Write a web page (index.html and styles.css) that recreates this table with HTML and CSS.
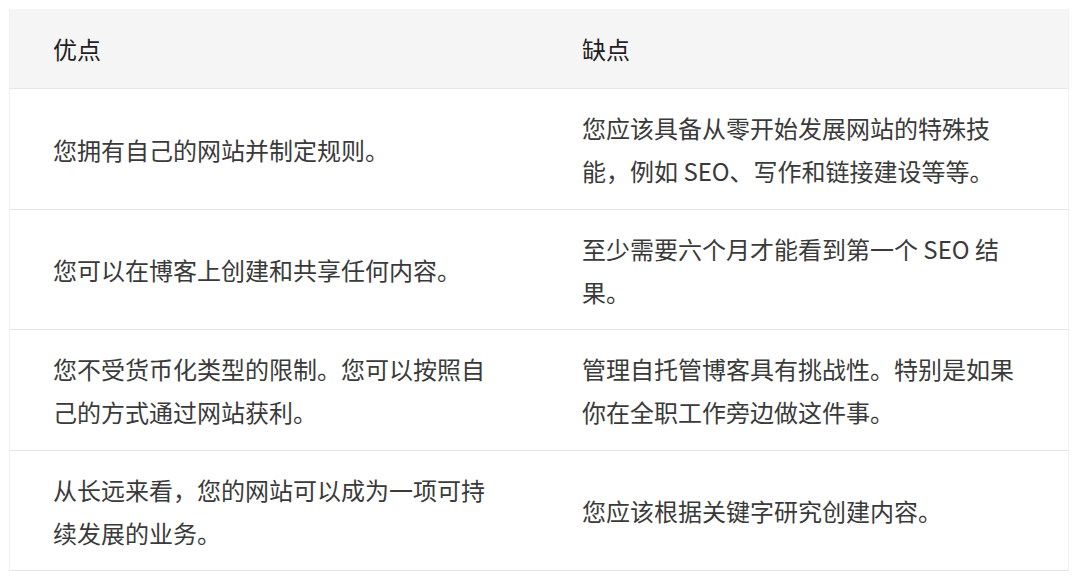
FILE: index.html
```html
<!DOCTYPE html>
<html lang="zh-CN">
<head>
<meta charset="utf-8">
<title>优点与缺点</title>
<link rel="stylesheet" href="styles.css">
</head>
<body>
<div class="wrap">
<table class="cmp">
  <thead>
    <tr><th>优点</th><th>缺点</th></tr>
  </thead>
  <tbody>
    <tr><td>您拥有自己的网站并制定规则。</td><td>您应该具备从零开始发展网站的特殊技能，例如 SEO、写作和链接建设等等。</td></tr>
    <tr><td>您可以在博客上创建和共享任何内容。</td><td>至少需要六个月才能看到第一个 SEO 结果。</td></tr>
    <tr><td>您不受货币化类型的限制。您可以按照自己的方式通过网站获利。</td><td>管理自托管博客具有挑战性。特别是如果你在全职工作旁边做这件事。</td></tr>
    <tr><td>从长远来看，您的网站可以成为一项可持续发展的业务。</td><td>您应该根据关键字研究创建内容。</td></tr>
  </tbody>
</table>
</div>
</body>
</html>
```

FILE: styles.css
```css
html, body {
  margin: 0;
  padding: 0;
  background: #ffffff;
}
.wrap {
  padding: 9px 0 0 9px;
}
.cmp {
  width: 1060px;
  border-collapse: collapse;
  table-layout: fixed;
  font-family: "Noto Sans CJK SC", "Noto Sans", sans-serif;
  font-size: 24px;
  line-height: 43px;
  border-left: 1px solid #f1f1f1;
  border-right: 1px solid #f1f1f1;
}
.cmp th,
.cmp td {
  width: 50%;
  text-align: left;
  vertical-align: middle;
  padding: 17px 36px 16.5px 43px;
  font-weight: normal;
}
.cmp th {
  background: #f5f5f5;
  color: #1f1f1f;
  padding-top: 18px;
  padding-bottom: 18px;
  border-bottom: 1px solid #e6e6e6;
}
.cmp td {
  color: #3a3a3a;
  border-bottom: 1px solid #e6e6e6;
}
```
